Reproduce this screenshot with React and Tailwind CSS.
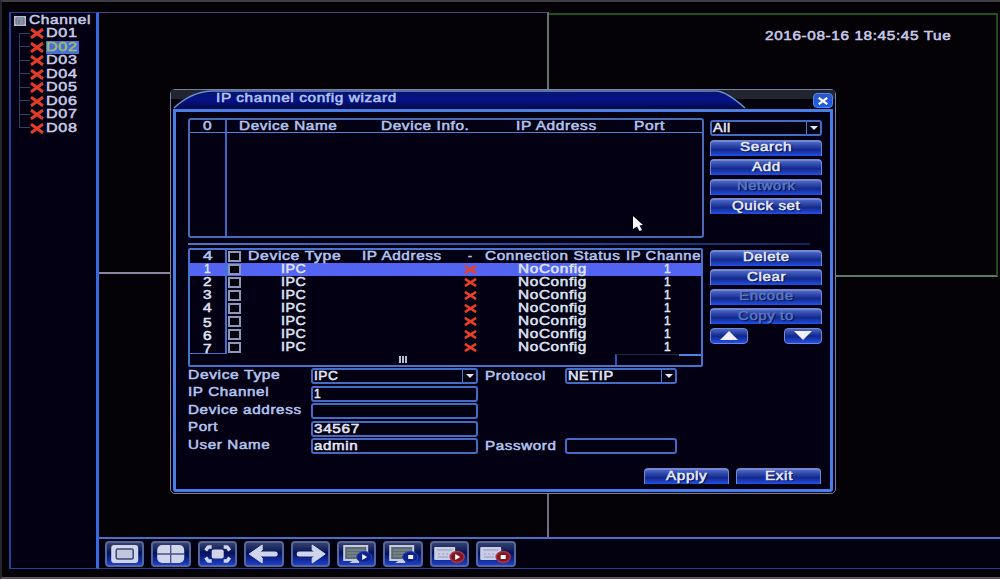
import React, { useLayoutEffect, useRef, useState } from "react";

const channels = ["D01", "D02", "D03", "D04", "D05", "D06", "D07", "D08"];
const rows = [1, 2, 3, 4, 5, 6, 7];

// The recorder's font is a very wide sans, so labels get stretched to a set width
const Fit = ({ w, children, className = "" }) => {
  const ref = useRef(null);
  const [scale, setScale] = useState(1);

  useLayoutEffect(() => {
    setScale(w / ref.current.offsetWidth);
  }, [w, children]);

  return (
    <span className={`block shrink-0 text-left whitespace-nowrap ${className}`} style={{ width: w }}>
      <span
        ref={ref}
        className="inline-block origin-left tracking-[0.5px]"
        style={{ transform: `scaleX(${scale})` }}
      >
        {children}
      </span>
    </span>
  );
};

const Cross = ({ className }) => (
  <svg viewBox="0 0 14 10" preserveAspectRatio="none" className={className}>
    <path d="M1 1 L13 9 M13 1 L1 9" stroke="currentColor" strokeWidth="2.8" />
  </svg>
);

const Button = ({ label, w, disabled, className = "w-[112px]" }) => (
  <button
    className={`flex h-[16px] shrink-0 items-center justify-center rounded-t-[4px] border border-t-2 border-b-0 border-[#7488d2] bg-linear-to-b from-[#4b66c6] via-[#14298c] via-55% to-[#2350e6] text-[12px] leading-[14px] ${className} ${
      disabled ? "text-[#5876c4]" : "text-[#e6eaff]"
    }`}
  >
    <Fit w={w} className="-mt-[3px] [text-shadow:1px_1px_1px_#050a38]">{label}</Fit>
  </button>
);

const ArrowButton = ({ up }) => (
  <button className="flex h-[16px] w-[38px] items-center justify-center rounded-[4px] border border-[#7488d2] bg-linear-to-b from-[#4b66c6] via-[#12278a] via-50% to-[#2250e8]">
    <svg viewBox="0 0 18 9" className="h-[9px] w-[18px]">
      <path d={up ? "M0 9 L9 0 L18 9Z" : "M0 0 L18 0 L9 9Z"} fill="#eef0ff" />
    </svg>
  </button>
);

const Field = ({ value, w, select, className = "w-[167px]" }) => (
  <div
    className={`flex h-[16px] shrink-0 items-center rounded-[3px] border-2 border-[#456bc2] bg-[#030012] text-[12px] leading-[12px] text-[#e4e7f8] ${className}`}
  >
    <div className="flex-1 pl-[1px]">{value && <Fit w={w}>{value}</Fit>}</div>
    {select && (
      <div className="flex h-full w-[14px] items-center justify-center border-l border-[#527bd6]">
        <svg viewBox="0 0 8 4" className="h-[4px] w-[8px]">
          <path d="M0 0 H8 L4 4Z" fill="#e4e7f8" />
        </svg>
      </div>
    )}
  </div>
);

const Box = () => (
  <span className="block h-[11px] w-[13px] shrink-0 border-2 border-[#8d98b4] bg-[#04020f]" />
);

const Monitor = ({ square }) => (
  <>
    <path d="M7 5 H30 V19 H7Z" fill="#5c6b72" stroke="#c4cae0" strokeWidth="2" />
    <path d="M10 9 H27 M10 12 H27 M10 15 H25" stroke="#88979a" strokeWidth="1" />
    <path d="M15 20 H22 V22 H12Z" fill="#c4cae0" />
    <ellipse cx="27" cy="16" rx="7.5" ry="5.5" fill="#10228c" stroke="#2444b8" />
    {square ? (
      <rect x="25" y="14" width="5" height="4" fill="#f4f5ff" />
    ) : (
      <path d="M25 13 L30 16 L25 19Z" fill="#f4f5ff" />
    )}
  </>
);

const Recorder = ({ square }) => (
  <>
    <rect x="4" y="6" width="21" height="13" rx="1" fill="#c9cee6" />
    <path d="M7 9 H22 M8 13 H10 M12 13 H14 M16 13 H18 M8 16 H18" stroke="#8d97b8" strokeWidth="1.2" />
    <ellipse cx="27" cy="16" rx="7" ry="5.5" fill="#7d1824" stroke="#ad3440" strokeWidth="1.5" />
    {square ? (
      <rect x="24.5" y="14" width="5" height="4" fill="#fff" />
    ) : (
      <path d="M25 13 L30 16 L25 19Z" fill="#fff" />
    )}
  </>
);

const toolbar = [
  <>
    <rect x="6" y="4" width="27" height="18" rx="3" fill="#d0d5ec" />
    <rect x="11" y="8" width="17" height="10" rx="1.5" fill="#c3c7dd" stroke="#3c4674" strokeWidth="1.5" />
  </>,
  <>
    <rect x="6" y="4" width="27" height="18" rx="5" fill="#d0d5ec" />
    <path d="M19.5 4 V22 M6 13 H33" stroke="#44508a" strokeWidth="1.3" />
  </>,
  <>
    <rect x="13.5" y="8.5" width="12" height="9" rx="2" fill="#d0d5ec" />
    <path
      d="M7.5 9.5 L10 6 H13.5 M25.5 6 H29 L31.5 9.5 M7.5 16.5 L10 20 H13.5 M25.5 20 H29 L31.5 16.5"
      fill="none"
      stroke="#d0d5ec"
      strokeWidth="3.5"
      strokeLinejoin="round"
    />
  </>,
  <>
    <path d="M18 4 L5 13 L18 22 L18 17 L13 13 L18 9Z" fill="#d0d5ec" stroke="#d0d5ec" strokeLinejoin="round" />
    <path d="M10 13 H31" stroke="#d0d5ec" strokeWidth="5" strokeLinecap="round" />
  </>,
  <>
    <path d="M21 4 L34 13 L21 22 L21 17 L26 13 L21 9Z" fill="#d0d5ec" stroke="#d0d5ec" strokeLinejoin="round" />
    <path d="M29 13 H8" stroke="#d0d5ec" strokeWidth="5" strokeLinecap="round" />
  </>,
  <Monitor />,
  <Monitor square />,
  <Recorder />,
  <Recorder square />,
];

const Sidebar = () => (
  <aside className="flex w-[90px] shrink-0 flex-col border-t border-r-[3px] border-b border-l-2 border-[#21439a] border-r-[#396be0] bg-[#030014] pt-[1px] pl-[3px] text-[12.5px] leading-[13px] text-[#c8cce2]">
    <div className="flex h-[13px] items-center gap-[3px]">
      <svg viewBox="0 0 12 10" className="h-[10px] w-[12px]">
        <rect width="12" height="10" fill="#b5bac9" />
        <path d="M2 2 H10 V8 H2Z M2 4 H10 M2 6 H10 M5 4 V8" fill="none" stroke="#626a80" />
      </svg>
      <Fit w={62}>Channel</Fit>
    </div>
    <div className="flex flex-col">
      {channels.map((name, i) => (
        <div key={name} className="flex h-[13.5px] items-center">
          <div className="flex h-full w-[16px] shrink-0 flex-col pl-[5px]">
            <div className={`h-1/2 border-b border-[#34405f] ${i > 0 ? "border-l" : ""}`} />
            <div className={`h-1/2 border-[#34405f] ${i < 7 ? "border-l" : ""}`} />
          </div>
          <Cross className="h-[11px] w-[14px] shrink-0 text-[#e43c24]" />
          <div className={`ml-[2px] flex h-[13px] w-[33px] items-center ${i === 1 ? "bg-[#486dd6] text-[#9dbc70]" : ""}`}>
            <Fit w={31}>{name}</Fit>
          </div>
        </div>
      ))}
    </div>
  </aside>
);

const FoundDevices = () => (
  <div className="flex h-[120px] w-[516px] flex-col rounded-[3px] border-2 border-[#4a6ab4]">
    <div className="flex h-[13px] shrink-0 items-center border-b border-[#5680d4]">
      <div className="flex h-full w-[37px] shrink-0 items-center justify-center border-r-2 border-[#3c68c4]">
        <Fit w={9}>0</Fit>
      </div>
      <Fit w={99} className="ml-[12px]">Device Name</Fit>
      <Fit w={88} className="ml-[43px]">Device Info.</Fit>
      <Fit w={81} className="ml-[47px]">IP Address</Fit>
      <Fit w={31} className="ml-[37px]">Port</Fit>
    </div>
    <div className="w-[37px] flex-1 border-r-2 border-[#3c68c4]" />
  </div>
);

const ChannelTable = () => (
  <div className="flex h-[119px] w-[515px] flex-col rounded-[2px] border-2 border-[#4474cc]">
    <div className="flex h-[13px] shrink-0 items-center">
      <div className="flex h-full w-[37px] shrink-0 items-center justify-center border-r-2 border-[#3c74d2]">
        <Fit w={10}>4</Fit>
      </div>
      <div className="ml-[1px]"><Box /></div>
      <Fit w={93} className="ml-[7px]">Device Type</Fit>
      <Fit w={80} className="ml-[21px]">IP Address</Fit>
      <Fit w={5} className="ml-[26px]">-</Fit>
      <Fit w={136} className="ml-[12px]">Connection Status</Fit>
      <Fit w={75} className="ml-[5px]">IP Channe</Fit>
    </div>
    {rows.map((n) => (
      <div
        key={n}
        className={`flex h-[13.1px] shrink-0 items-center text-[#dfe3f2] ${n === 1 ? "bg-[#5364f2]" : ""}`}
      >
        <div
          className={`flex h-full w-[37px] shrink-0 items-center justify-center border-r-2 border-[#3c74d2] ${
            n === 7 ? "border-b" : ""
          }`}
        >
          <Fit w={n === 1 ? 7 : 9} className={n > 4 ? "translate-y-[2px]" : ""}>{n}</Fit>
        </div>
        <div className="ml-[1px]"><Box /></div>
        <Fit w={26} className="ml-[40px]">IPC</Fit>
        <Cross className="ml-[157px] h-[9px] w-[13px] shrink-0 text-[#e84028]" />
        <Fit w={69} className="ml-[41px]">NoConfig</Fit>
        <Fit w={7} className="ml-[77px]">1</Fit>
      </div>
    ))}
    <div className="flex flex-1">
      <div className="flex w-[425px] items-center justify-center gap-[1px]">
        <i className="block h-[7px] w-[2px] bg-[#b5bdd0]" />
        <i className="block h-[7px] w-[2px] bg-[#b5bdd0]" />
        <i className="block h-[7px] w-[2px] bg-[#b5bdd0]" />
      </div>
      <div className="w-[64px] border-t border-l-2 border-t-[#1a2a44] border-l-[#2c58b0]" />
      <div className="flex-1 border-t-2 border-[#4d82de]" />
    </div>
  </div>
);

const FormRow = ({ label, w, children }) => (
  <div className="flex h-[17.5px] items-center">
    <div className="w-[123px] shrink-0 -translate-y-[1px]">
      <Fit w={w}>{label}</Fit>
    </div>
    {children}
  </div>
);

const Wizard = () => (
  <div className="absolute top-[87px] left-[168px] flex h-[405px] w-[666px] flex-col rounded-[5px] border border-[#7483a2] bg-[#030014] text-[12px] leading-[13px] text-[#b4c4ec]">
    <div className="relative h-[19px] shrink-0">
      <svg viewBox="0 0 664 19" className="h-full w-full">
        <defs>
          <linearGradient id="title" x1="0" y1="0" x2="0" y2="1">
            <stop offset="0" stopColor="#06146a" />
            <stop offset="0.5" stopColor="#07128a" />
            <stop offset="1" stopColor="#020b44" />
          </linearGradient>
        </defs>
        <rect width="664" height="9" fill="#22242f" />
        <rect y="9" width="664" height="10" fill="#05040c" />
        <path d="M3 19 Q20 2 40 1 H546 Q556 2 575 18Z" fill="url(#title)" />
        <path d="M3 18 Q20 2 40 1 H546 Q556 2 574 18" fill="none" stroke="#6590cc" strokeWidth="1.5" />
      </svg>
      <div className="absolute top-[2px] left-[45px]">
        <Fit w={181}>IP channel config wizard</Fit>
      </div>
      <button className="absolute top-[3px] right-[2px] flex h-[15px] w-[20px] items-center justify-center rounded-[4px] border border-[#5387e8] bg-linear-to-b from-[#2c56c8] to-[#1d5bee]">
        <Cross className="h-[8px] w-[10px] text-white" />
      </button>
    </div>
    <div className="mx-[2px] mb-[1px] flex flex-1 flex-col rounded-b-[3px] border-[3px] border-[#4a7ee6] pt-[6px] pl-[12px]">
      <div className="flex h-[125px] gap-[6px]">
        <FoundDevices />
        <div className="flex flex-col gap-[3.5px] pt-[2px]">
          <Field value="All" w={18} select className="w-[112px]" />
          <Button label="Search" w={52} />
          <Button label="Add" w={29} />
          <Button label="Network" w={59} disabled />
          <Button label="Quick set" w={69} />
        </div>
      </div>
      <div className="h-[1.5px] w-[622px] shrink-0 bg-linear-to-r from-[#5375bd] via-[#3152a0] to-[#17244f]" />
      <div className="mt-[3px] flex h-[119px] gap-[7px]">
        <ChannelTable />
        <div className="flex flex-col gap-[3.5px] pt-[2px]">
          <Button label="Delete" w={47} />
          <Button label="Clear" w={39} />
          <Button label="Encode" w={55} disabled />
          <Button label="Copy to" w={56} disabled />
          <div className="flex justify-between">
            <ArrowButton up />
            <ArrowButton />
          </div>
        </div>
      </div>
      <div className="mt-[1px] flex">
        <div className="flex flex-col">
          <FormRow label="Device Type" w={92}><Field value="IPC" w={25} select /></FormRow>
          <FormRow label="IP Channel" w={81}><Field value="1" w={7} /></FormRow>
          <FormRow label="Device address" w={114}><Field /></FormRow>
          <FormRow label="Port" w={30}><Field value="34567" w={46} /></FormRow>
          <FormRow label="User Name" w={82}><Field value="admin" w={44} /></FormRow>
        </div>
        <div className="ml-[7px] flex flex-col justify-between">
          <div className="flex h-[17.5px] items-center">
            <div className="w-[80px]"><Fit w={61}>Protocol</Fit></div>
            <Field value="NETIP" w={46} select className="w-[112px]" />
          </div>
          <div className="flex h-[17.5px] items-center">
            <div className="w-[80px]"><Fit w={72}>Password</Fit></div>
            <Field className="w-[112px]" />
          </div>
        </div>
      </div>
      <div className="mt-[13px] flex justify-end gap-[7px] pr-[9px]">
        <Button label="Apply" w={42} className="w-[85px]" />
        <Button label="Exit" w={28} className="w-[85px]" />
      </div>
    </div>
  </div>
);

const App = () => {
  return (
    <div className="relative flex h-[579px] w-[1000px] flex-col overflow-hidden border-t-2 border-b-2 border-l-2 border-t-[#3c3c42] border-b-[#5a555c] border-l-[#24252b] bg-[#040207] pt-[10px] pb-[8px] pl-[7px] font-['Liberation_Sans',Arial,sans-serif] [-webkit-text-stroke:0.5px_currentColor]">
      <div className="flex flex-1">
        <Sidebar />
        <div className="flex flex-1 flex-col">
          <main className="grid flex-1 grid-cols-[450px_1fr] grid-rows-[262px_1fr]">
            <div className="border-t border-r-2 border-b-2 border-t-[#4d4880] border-r-[#617467] border-b-[#8c83a0]" />
            <div className="mt-[1px] mr-[2px] mb-[-3px] border-t-2 border-r-2 border-b-2 border-t-[#23511f] border-r-[#204b1c] border-b-[#5d7b60]">
              <div className="mt-[13px] ml-[216px] text-[12px] leading-[16px] text-[#c9cbea]">
                <Fit w={186}>2016-08-16 18:45:45 Tue</Fit>
              </div>
            </div>
            <div className="border-r-2 border-[#706d85]" />
            <div />
          </main>
          <footer className="flex h-[32px] shrink-0 items-start gap-[7px] border-t-2 border-b border-t-[#466fc5] border-b-[#263f8c] bg-[#030010] pt-[2px] pl-[6px]">
            {toolbar.map((icon, i) => (
              <button
                key={i}
                className="h-[26px] w-[39.4px] rounded-[4px] border-2 border-[#53679a] bg-linear-to-b from-[#35406c] via-[#071159] via-45% to-[#1c40cf]"
              >
                <svg viewBox="2 2 35 22" className="h-full w-full">{icon}</svg>
              </button>
            ))}
          </footer>
        </div>
      </div>
      <Wizard />
      <svg viewBox="0 0 12 16" className="absolute top-[214px] left-[630px] h-[16px] w-[12px]">
        <path d="M1 0 L11 9 L7.5 9.5 L10 14 L7.5 15 L5 10.5 L1 13Z" fill="#f5f5fa" />
      </svg>
    </div>
  );
};

export default App;
